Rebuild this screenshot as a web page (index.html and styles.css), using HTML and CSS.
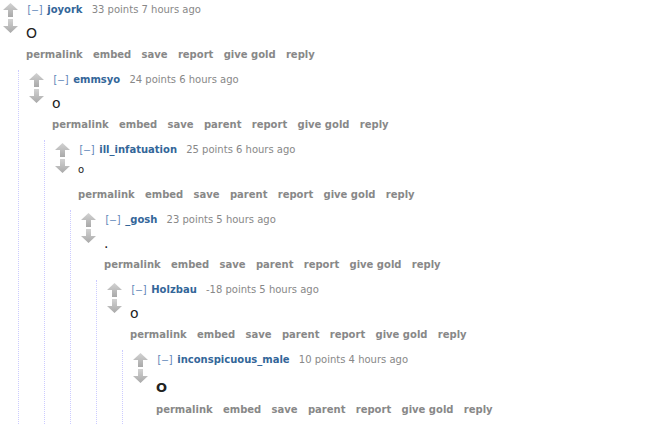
FILE: index.html
```html
<!DOCTYPE html>
<html lang="en">
<head>
    <meta charset="UTF-8">
    <title>comments</title>
    <link rel="stylesheet" href="styles.css">
</head>
<body>
    <svg width="0" height="0" class="defs">
        <defs>
            <linearGradient id="grey" x1="0" y1="0" x2="0" y2="1">
                <stop offset="0" stop-color="#d2d2d2"/>
                <stop offset="1" stop-color="#a9a9a9"/>
            </linearGradient>
            <symbol id="up" viewBox="0 0 15 14">
                <polygon points="7.5,0 15,7 10,7 10,14 5,14 5,7 0,7" fill="url(#grey)"/>
            </symbol>
            <symbol id="down" viewBox="0 0 15 14">
                <polygon points="5,0 10,0 10,7 15,7 7.5,14 0,7 5,7" fill="url(#grey)"/>
            </symbol>
        </defs>
    </svg>

    <div class="comment">
        <div class="row">
            <div class="midcol">
                <svg class="arrow"><use href="#up"/></svg>
                <svg class="arrow down"><use href="#down"/></svg>
            </div>
            <div class="entry">
                <p class="tagline"><a class="expand">[–]</a> <a class="author">joyork</a> <span>33 points 7 hours ago</span></p>
                <div class="md">O</div>
                <ul class="buttons">
                    <li>permalink</li><li>embed</li><li>save</li><li>report</li><li>give gold</li><li>reply</li>
                </ul>
            </div>
        </div>
        <div class="child">

            <div class="comment">
                <div class="row">
                    <div class="midcol">
                        <svg class="arrow"><use href="#up"/></svg>
                        <svg class="arrow down"><use href="#down"/></svg>
                    </div>
                    <div class="entry">
                        <p class="tagline"><a class="expand">[–]</a> <a class="author">emmsyo</a> <span>24 points 6 hours ago</span></p>
                        <div class="md">o</div>
                        <ul class="buttons">
                            <li>permalink</li><li>embed</li><li>save</li><li>parent</li><li>report</li><li>give gold</li><li>reply</li>
                        </ul>
                    </div>
                </div>
                <div class="child">

                    <div class="comment">
                        <div class="row">
                            <div class="midcol">
                                <svg class="arrow"><use href="#up"/></svg>
                                <svg class="arrow down"><use href="#down"/></svg>
                            </div>
                            <div class="entry">
                                <p class="tagline"><a class="expand">[–]</a> <a class="author">ill_infatuation</a> <span>25 points 6 hours ago</span></p>
                                <div class="md"><sup>o</sup></div>
                                <ul class="buttons">
                                    <li>permalink</li><li>embed</li><li>save</li><li>parent</li><li>report</li><li>give gold</li><li>reply</li>
                                </ul>
                            </div>
                        </div>
                        <div class="child">

                            <div class="comment">
                                <div class="row">
                                    <div class="midcol">
                                        <svg class="arrow"><use href="#up"/></svg>
                                        <svg class="arrow down"><use href="#down"/></svg>
                                    </div>
                                    <div class="entry">
                                        <p class="tagline"><a class="expand">[–]</a> <a class="author">_gosh</a> <span>23 points 5 hours ago</span></p>
                                        <div class="md">.</div>
                                        <ul class="buttons">
                                            <li>permalink</li><li>embed</li><li>save</li><li>parent</li><li>report</li><li>give gold</li><li>reply</li>
                                        </ul>
                                    </div>
                                </div>
                                <div class="child">

                                    <div class="comment">
                                        <div class="row">
                                            <div class="midcol">
                                                <svg class="arrow"><use href="#up"/></svg>
                                                <svg class="arrow down"><use href="#down"/></svg>
                                            </div>
                                            <div class="entry">
                                                <p class="tagline"><a class="expand">[–]</a> <a class="author">Holzbau</a> <span>-18 points 5 hours ago</span></p>
                                                <div class="md">o</div>
                                                <ul class="buttons">
                                                    <li>permalink</li><li>embed</li><li>save</li><li>parent</li><li>report</li><li>give gold</li><li>reply</li>
                                                </ul>
                                            </div>
                                        </div>
                                        <div class="child">

                                            <div class="comment last">
                                                <div class="row">
                                                    <div class="midcol">
                                                        <svg class="arrow"><use href="#up"/></svg>
                                                        <svg class="arrow down"><use href="#down"/></svg>
                                                    </div>
                                                    <div class="entry">
                                                        <p class="tagline"><a class="expand">[–]</a> <a class="author">inconspicuous_male</a> <span>10 points 4 hours ago</span></p>
                                                        <div class="md big">O</div>
                                                        <ul class="buttons">
                                                            <li>permalink</li><li>embed</li><li>save</li><li>parent</li><li>report</li><li>give gold</li><li>reply</li>
                                                        </ul>
                                                    </div>
                                                </div>
                                            </div>

                                        </div>
                                    </div>

                                </div>
                            </div>

                        </div>
                    </div>

                </div>
            </div>

        </div>
    </div>
</body>
</html>
```

FILE: styles.css
```css
body {
    margin: 0;
    background: #fff;
    font-family: "DejaVu Sans", Verdana, sans-serif;
    overflow: hidden;
}

.defs {
    position: absolute;
}

.row {
    display: flex;
}

.midcol {
    width: 26px;
    flex: none;
    padding-top: 3px;
}

.arrow {
    display: block;
    width: 15px;
    height: 14px;
    margin-left: 3px;
}

.arrow.down {
    margin-top: 2px;
}

.tagline {
    margin: 3px 0 0 0;
    font-size: 10px;
    line-height: 14px;
    color: #888;
    white-space: nowrap;
}

.tagline .expand {
    font-family: "DejaVu Sans Mono", monospace;
    color: #5f86b8;
}

.tagline .author {
    font-weight: bold;
    color: #369;
    margin-right: 6px;
}

.md {
    margin-top: 6px;
    font-size: 14px;
    line-height: 20px;
    color: #222;
}

.md sup {
    font-size: 10px;
    line-height: 0;
    vertical-align: 5px;
}

/* le dernier commentaire a un titre un peu plus gras */
.md.big {
    margin-top: 11px;
    margin-bottom: 1px;
    font-size: 13px;
    font-weight: bold;
}

.buttons {
    display: flex;
    gap: 10.3px;
    margin: 5px 0 0 0;
    padding: 0;
    list-style: none;
    font-size: 10px;
    line-height: 14px;
    font-weight: bold;
    color: #888;
    white-space: nowrap;
}

.child {
    margin: 8px 0 0 18px;
    padding-left: 7px;
    border-left: 1px dotted #ccf;
}

.comment.last {
    padding-bottom: 9px;
}
```
